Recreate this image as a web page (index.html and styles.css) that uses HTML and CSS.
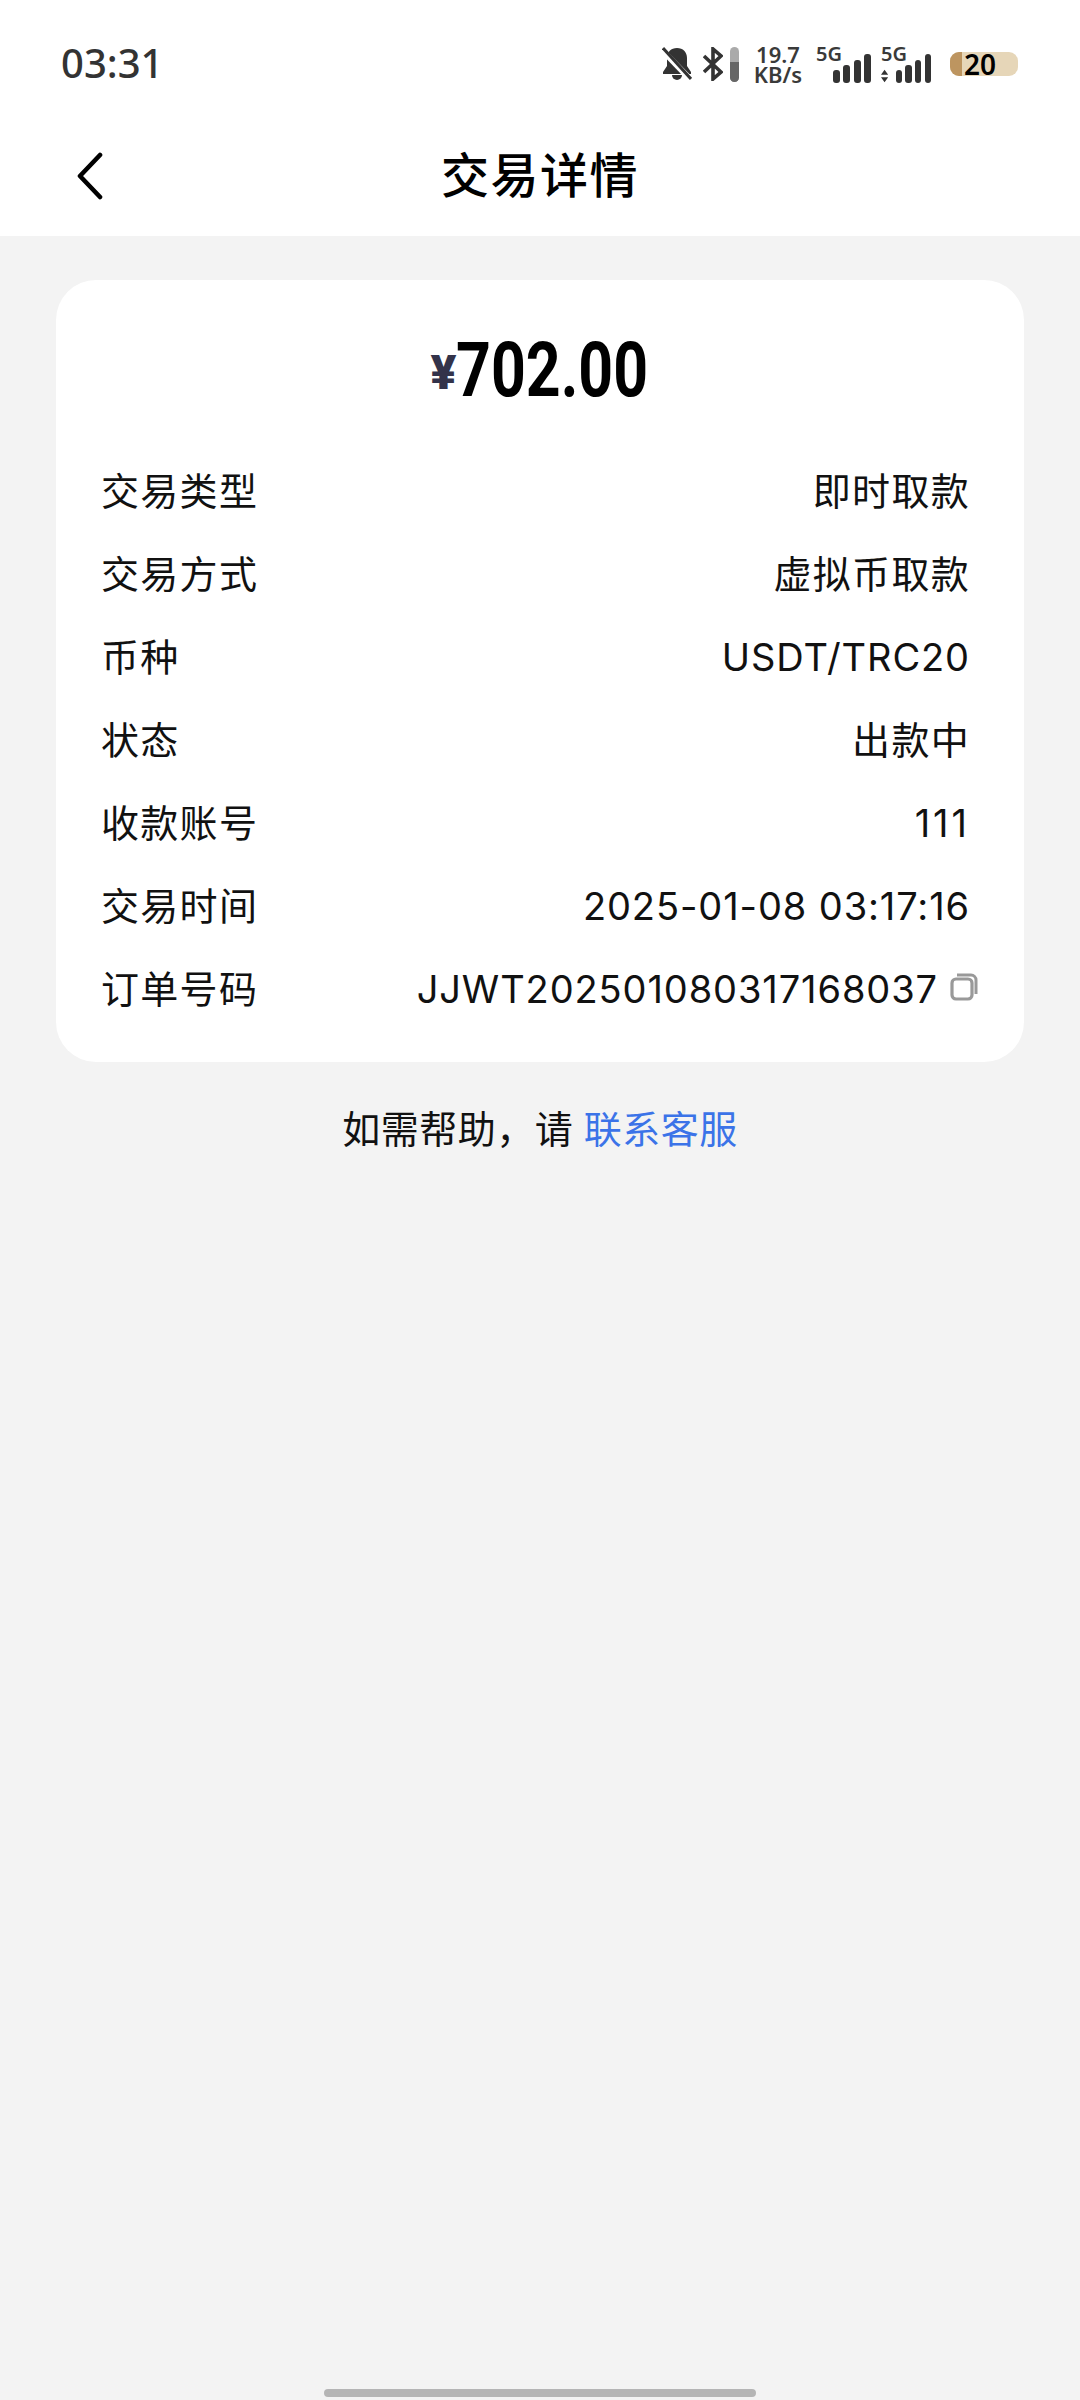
FILE: index.html
```html
<!DOCTYPE html>
<html lang="zh-CN">
<head>
	<meta charset="utf-8" />
	<title>交易详情</title>
	<link rel="stylesheet" href="styles.css">
</head>
<body>

<div class="statusbar">
	<span class="clock">03:31</span>
	<div class="indicators">
		<!-- muted bell -->
		<svg class="ic-bell" width="30" height="34" viewBox="0 0 30 34">
			<path d="M15 1C9 1 5 5 5 11v8l-4 6v2h28v-2l-4-6v-8C25 5 21 1 15 1z" fill="#333"/>
			<path d="M10 28a5 5 0 0 0 10 0z" fill="#333"/>
			<path d="M0 3l30 31" stroke="#fff" stroke-width="6"/>
			<path d="M1 1l28 31" stroke="#333" stroke-width="3"/>
		</svg>
		<!-- bluetooth -->
		<svg class="ic-bt" width="20" height="34" viewBox="0 0 20 34">
			<path d="M1 9l17 16-8 7V2l8 7L1 25" fill="none" stroke="#333" stroke-width="3.6"/>
		</svg>
		<div class="bt-level"><div class="bt-level-fill"></div></div>
		<div class="speed"><span>19.7</span><span>KB/s</span></div>
		<div class="net">
			<span class="net-label">5G</span>
			<div class="bars">
				<i class="b1"></i><i class="b2"></i><i class="b3"></i><i class="b4"></i>
			</div>
		</div>
		<div class="net net-second">
			<span class="net-label">5G</span>
			<div class="bars">
				<svg class="updown" width="8" height="14" viewBox="0 0 8 14">
					<path d="M4 0l4 5.500H0zM4 14l4-5.500H0z" fill="#333"/>
				</svg>
				<i class="b1"></i><i class="b2"></i><i class="b3"></i><i class="b4"></i>
			</div>
		</div>
		<div class="battery"><div class="battery-fill"></div><span class="battery-num">20</span></div>
	</div>
</div>

<div class="navbar">
	<svg class="back" width="28" height="48" viewBox="0 0 28 48">
		<path d="M24 3L4 24l20 21" fill="none" stroke="#000" stroke-width="4.6" stroke-linecap="round" stroke-linejoin="round"/>
	</svg>
	<div class="title">交易详情</div>
</div>

<div class="card">
	<div class="amount"><span class="yen">¥</span><span class="sum">702.00</span></div>
	<div class="row"><span>交易类型</span><span>即时取款</span></div>
	<div class="row"><span>交易方式</span><span>虚拟币取款</span></div>
	<div class="row"><span>币种</span><span class="latin">USDT/TRC20</span></div>
	<div class="row"><span>状态</span><span>出款中</span></div>
	<div class="row"><span>收款账号</span><span class="latin account">111</span></div>
	<div class="row"><span>交易时间</span><span class="latin">2025-01-08 03:17:16</span></div>
	<div class="row">
		<span>订单号码</span>
		<span class="order">
			<span class="latin">JJWT202501080317168037</span>
			<svg class="copy" width="28" height="28" viewBox="0 0 28 28">
				<rect x="2" y="6" width="20" height="20" rx="4" fill="none" stroke="#999" stroke-width="3.2"/>
				<path d="M7 2h14a5 5 0 0 1 5 5v14" fill="none" stroke="#999" stroke-width="3"/>
			</svg>
		</span>
	</div>
</div>

<div class="help">如需帮助，请 <a class="contact">联系客服</a></div>

<div class="home-bar"></div>

</body>
</html>
```

FILE: styles.css
```css
* {
	box-sizing: border-box;
}

body {
	margin: 0;
	width: 1080px;
	height: 2400px;
	background: #f3f3f3;
	color: #000;
	font-family: "Noto Sans", "Noto Sans CJK SC", sans-serif;
	position: relative;
	overflow: hidden;
}

/* status bar */
.statusbar {
	height: 118px;
	background: #fff;
	display: flex;
	justify-content: space-between;
	align-items: center;
	padding: 10px 62px 0 61px;
}
.clock {
	font-family: "Noto Sans", sans-serif;
	font-size: 40px;
	font-weight: 500;
	color: #333;
	margin-top: -3px;
}
.indicators {
	display: flex;
	align-items: center;
	height: 50px;
}
.ic-bt {
	margin-left: 11px;
}
.bt-level {
	width: 9px;
	height: 35px;
	margin-left: 7px;
	background: #aaa;
	border-radius: 5px;
	overflow: hidden;
	display: flex;
	align-items: flex-end;
}
.bt-level-fill {
	width: 100%;
	height: 20px;
	background: #666;
}
.speed {
	display: flex;
	flex-direction: column;
	align-items: center;
	width: 48px;
	margin-left: 15px;
	font-size: 22px;
	line-height: 20px;
	font-weight: 600;
	color: #3a3a3a;
}
.net {
	position: relative;
	width: 55px;
	height: 38px;
	margin-left: 14px;
}
.net-second {
	margin-left: 10px;
	width: 50px;
}
.net-label {
	position: absolute;
	left: 0;
	top: -1px;
	font-size: 20px;
	line-height: 20px;
	font-weight: 600;
	color: #3a3a3a;
}
.bars {
	display: flex;
	align-items: flex-end;
	justify-content: flex-end;
	gap: 3.500px;
	height: 100%;
}
.bars i {
	display: block;
	width: 7px;
	background: #333;
	border-radius: 3px;
}
.bars .b1 { height: 13px; }
.bars .b2 { height: 18px; }
.bars .b3 { height: 23px; }
.bars .b4 { height: 29px; }
.updown {
	margin-right: 4px;
}
.battery {
	position: relative;
	width: 68px;
	height: 24px;
	margin-left: 19px;
	background: #e6d6b8;
	border-radius: 9px;
}
.battery-fill {
	width: 12px;
	height: 100%;
	background: #bd9560;
	border-radius: 9px 0 0 9px;
}
.battery-num {
	position: absolute;
	left: 14px;
	top: 0;
	font-size: 28px;
	line-height: 24px;
	font-weight: 600;
	color: #000;
}

/* title bar */
.navbar {
	position: relative;
	height: 118px;
	background: #fff;
	display: flex;
	align-items: center;
	justify-content: center;
}
.back {
	position: absolute;
	left: 76px;
	top: 34px;
}
.title {
	font-size: 48px;
	font-weight: 500;
	letter-spacing: 1.500px;
	margin-top: -11px;
}

/* details card */
.card {
	margin: 44px 56px 0;
	height: 782px;
	padding: 51px 54px 0 45px;
	background: #fff;
	border-radius: 40px;
}
.amount {
	display: flex;
	justify-content: center;
	align-items: center;
	height: 78px;
	margin-bottom: 38px;
	padding-left: 12px;
}
.yen {
	font-family: "Roboto", sans-serif;
	font-size: 48px;
	font-weight: 900;
	color: #33334a;
	margin-top: 4px;
}
.sum {
	display: inline-block;
	font-family: "Roboto", sans-serif;
	font-size: 76px;
	font-weight: 700;
	transform: scaleX(0.8);
	transform-origin: left center;
	margin-right: -44px;
}
.row {
	display: flex;
	justify-content: space-between;
	align-items: center;
	height: 83px;
	font-size: 38px;
	letter-spacing: 1.300px;
	color: #111;
}
.latin {
	font-family: "Inter", "Noto Sans", sans-serif;
	letter-spacing: 0.900px;
	margin-top: 4px;
}
.account {
	letter-spacing: 3px;
}
.order {
	display: flex;
	align-items: center;
	margin-right: -8px;
}
.copy {
	flex: none;
	margin-left: 12px;
}

.help {
	margin-top: 38px;
	text-align: center;
	font-size: 38px;
	line-height: 56px;
	letter-spacing: 0.500px;
	color: #111;
}
.contact {
	color: #3b73e8;
}

.home-bar {
	position: absolute;
	left: 324px;
	top: 2389px;
	width: 432px;
	height: 8px;
	border-radius: 4px;
	background: #b5b5b5;
}
```
